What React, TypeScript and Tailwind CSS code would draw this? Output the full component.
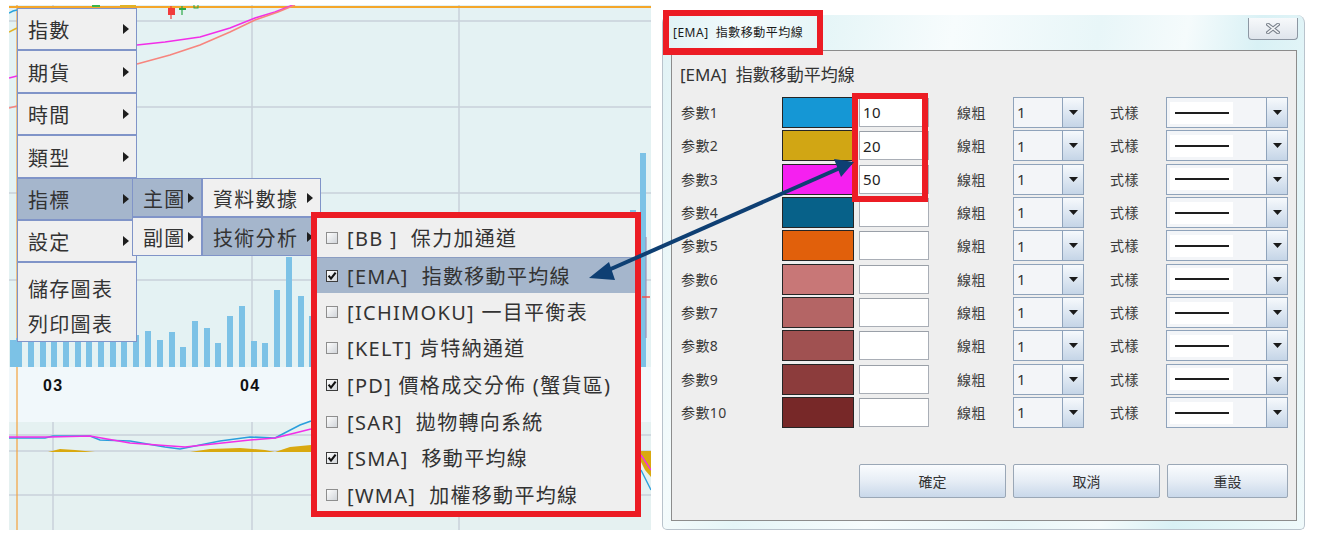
import React from "react";

const Tri = () => (
  <svg width="6" height="10" viewBox="0 0 6 10" className="shrink-0">
    <polygon points="0,0 6,5 0,10" fill="#1e1e1e" />
  </svg>
);

const DownTri = () => (
  <svg width="9" height="5" viewBox="0 0 9 5">
    <polygon points="0,0 9,0 4.5,5" fill="#1a1a1a" />
  </svg>
);

function CheckBox({ checked }: { checked: boolean }) {
  return (
    <svg width="12" height="12" viewBox="0 0 12 12" className="shrink-0">
      <defs>
        <linearGradient id="cbg" x1="0" y1="0" x2="1" y2="1">
          <stop offset="0" stopColor="#ffffff" />
          <stop offset="1" stopColor="#cfd3d8" />
        </linearGradient>
      </defs>
      <rect x="0.5" y="0.5" width="11" height="11" fill="url(#cbg)" stroke={checked ? "#3c3c3c" : "#8e8e8e"} />
      {checked && <path d="M2.6 5.6 L5 8.6 L9.6 2.6" fill="none" stroke="#111" strokeWidth="2.1" />}
    </svg>
  );
}

function MItem({ label, h, active, arrow = true }: { label: string; h: string; active?: boolean; arrow?: boolean }) {
  return (
    <div
      className={`flex items-center justify-between border border-[#8094c8] pl-[10px] pr-[7px] ${h} ${
        active ? "bg-[#a5b6cc]" : "bg-[#f0f0f0]"
      }`}
    >
      <span className="pt-[4px]">{label}</span>
      {arrow && <Tri />}
    </div>
  );
}

const bars: [number, number][] = [
  [10, 340], [16, 338], [28, 336], [40, 338], [51, 335], [63, 337], [75, 334], [86, 338], [98, 336], [110, 333], [121, 337], [133, 335],
  [145, 331], [157, 340], [169, 332], [180, 347], [192, 321], [204, 328], [215, 343], [227, 316], [239, 306], [251, 341], [262, 343],
  [274, 290], [286, 257], [298, 296], [309, 316], [321, 300], [333, 310], [630, 210], [640, 153],
];

function Chart() {
  return (
    <div className="relative w-[642px] h-[525px] shrink-0 ml-[9px] mt-[5px] text-[20px] tracking-[1.3px] text-[#333] leading-none">
      <svg width="642" height="525" viewBox="9 5 642 525" className="block">
        <rect x="9" y="5" width="642" height="362" fill="#e4f2f3" />
        <rect x="9" y="367" width="642" height="55" fill="#f1f8fb" />
        <rect x="9" y="422" width="642" height="108" fill="#e5f1f1" />
        {[21, 107, 193, 280].map((y) => (
          <line key={y} x1="9" x2="651" y1={y} y2={y} stroke="#c9d0da" strokeWidth="1.5" />
        ))}
        {[53, 252, 459].map((x) => (
          <line key={x} x1={x} x2={x} y1="5" y2="367" stroke="#c9d0da" strokeWidth="1.5" />
        ))}
        {[435, 451, 495].map((y) => (
          <line key={y} x1="9" x2="651" y1={y} y2={y} stroke="#c9d0da" strokeWidth="1.5" />
        ))}
        {[53, 252, 459].map((x) => (
          <line key={"l" + x} x1={x} x2={x} y1="422" y2="530" stroke="#c9d0da" strokeWidth="1.5" />
        ))}
        <line x1="17" x2="17" y1="5" y2="530" stroke="#f3a23c" strokeWidth="1.2" />
        {bars.map(([x, t]) => (
          <rect key={x} x={x} y={t} width="6" height={367 - t} fill="#7cc2e6" />
        ))}
        <line x1="646" x2="646" y1="237" y2="338" stroke="#9a93b8" strokeWidth="1.2" />
        <line x1="642" x2="650" y1="297" y2="297" stroke="#f0514d" strokeWidth="1.5" />
        <line x1="9" x2="651" y1="7" y2="7" stroke="#f5a62a" strokeWidth="2" />
        <polyline points="9,13 13,11 17,10" fill="none" stroke="#29a3dc" strokeWidth="1.5" />
        <polyline points="9,32 13,30 17,28" fill="none" stroke="#e0b328" strokeWidth="1.5" />
        <polyline points="9,78 17,76" fill="none" stroke="#f22ee8" strokeWidth="1.5" />
        <polyline points="9,108 17,106" fill="none" stroke="#f7857e" strokeWidth="1.5" />
        <line x1="171" x2="171" y1="6" y2="19" stroke="#f13b3b" strokeWidth="1.2" />
        <rect x="168" y="8" width="7" height="7" fill="#f13b3b" />
        <line x1="182" x2="182" y1="6" y2="15" stroke="#2aa845" strokeWidth="1.2" />
        <rect x="179" y="8" width="7" height="2" fill="#2aa845" />
        <rect x="194" y="4" width="4" height="4" fill="none" stroke="#2aa845" strokeWidth="1" />
        <rect x="92" y="5" width="8" height="2" fill="#3ab54a" />
        <rect x="120" y="5" width="16" height="2" fill="#e0b328" />
        <polyline points="137,45 165,42 200,37 230,28 255,18 275,12 293,5" fill="none" stroke="#f22ee8" strokeWidth="1.6" />
        <polyline points="137,64 170,55 200,45 230,32 255,20 278,12 295,5" fill="none" stroke="#f7857e" strokeWidth="1.6" />
        <polygon
          points="48,452 60,449 75,450 95,452 190,452 210,449 240,448 265,450 275,452 290,447 311,445 311,452"
          fill="#d9a90f"
        />
        <polyline
          points="9,438 45,438 53,436 90,436 100,440 130,441 165,447 180,449 190,447 220,441 250,437 275,438 300,425 311,421"
          fill="none"
          stroke="#2a9fdc"
          strokeWidth="1.6"
        />
        <polyline points="9,437 50,437 90,436 130,443 185,447 250,440 275,438 311,429" fill="none" stroke="#f22ee8" strokeWidth="1.6" />
        <polygon points="641,451 651,451 651,477 645,470 641,462" fill="#d9a90f" />
        <polyline points="641,455 651,470" fill="none" stroke="#f22ee8" strokeWidth="1.4" />
        <polyline points="641,470 651,490" fill="none" stroke="#2a9fdc" strokeWidth="1.4" />
        <text x="43" y="391" fontSize="16" fontWeight="700" fill="#111" fontFamily="Liberation Sans, Arial, sans-serif">
          03
        </text>
        <text x="240" y="391" fontSize="16" fontWeight="700" fill="#111" fontFamily="Liberation Sans, Arial, sans-serif">
          04
        </text>
      </svg>

      <div className="absolute left-[8px] top-[3px] w-[120px] flex flex-col">
        <MItem label="指數" h="h-[42px]" />
        <MItem label="期貨" h="h-[43px]" />
        <MItem label="時間" h="h-[42px]" />
        <MItem label="類型" h="h-[43px]" />
        <MItem label="指標" h="h-[42px]" active />
        <MItem label="設定" h="h-[42px]" />
        <div className="h-[80px] border border-[#8094c8] bg-[#f0f0f0] pl-[10px] pt-[15px] flex flex-col gap-[12px]">
          <span className="leading-[23px]">儲存圖表</span>
          <span className="leading-[23px]">列印圖表</span>
        </div>
      </div>

      <div className="absolute left-[123px] top-[173px] w-[70px] flex flex-col">
        <MItem label="主圖" h="h-[39px]" active />
        <MItem label="副圖" h="h-[39px]" />
      </div>
      <div className="absolute left-[193px] top-[173px] w-[119px] flex flex-col">
        <MItem label="資料數據" h="h-[39px]" />
        <MItem label="技術分析" h="h-[39px]" active />
      </div>

      <div className="absolute left-[302px] top-[207px] w-[330px] h-[305px] border-[6px] border-[#ec1c24] bg-[#efefef] overflow-hidden">
        <div className="flex flex-col pt-[2px]">
          {[
            ["[BB ]  保力加通道", false, false],
            ["[EMA]  指數移動平均線", true, true],
            ["[ICHIMOKU] 一目平衡表", false, false],
            ["[KELT] 肯特納通道", false, false],
            ["[PD] 價格成交分佈 (蟹貨區)", true, false],
            ["[SAR]  拋物轉向系統", false, false],
            ["[SMA]  移動平均線", true, false],
            ["[WMA]  加權移動平均線", false, false],
          ].map(([t, c, a]) => (
            <div
              key={t as string}
              className={`h-[36.7px] flex items-center pl-[9px] gap-[9px] ${
                a ? "bg-[#a5b6cc] border-t border-[#8b9dc2]" : ""
              }`}
            >
              <CheckBox checked={c as boolean} />
              <span className="whitespace-pre pt-[2px]">{t as string}</span>
            </div>
          ))}
        </div>
      </div>
    </div>
  );
}

const swatches = [
  "bg-[#1597d5]",
  "bg-[#d1a614]",
  "bg-[#f520f0]",
  "bg-[#076189]",
  "bg-[#e1600b]",
  "bg-[#c87777]",
  "bg-[#b46565]",
  "bg-[#a05151]",
  "bg-[#8c3c3c]",
  "bg-[#772828]",
];
const values = ["10", "20", "50", "", "", "", "", "", "", ""];

function DropBtn() {
  return (
    <div className="w-[21px] h-full border-l border-[#8fa3bb] bg-gradient-to-b from-[#f6f9fc] to-[#c5d5e7] flex items-center justify-center">
      <DownTri />
    </div>
  );
}

function Dialog() {
  return (
    <div className="relative shrink-0 ml-[11px] mt-[15px] w-[643px] h-[515px] rounded-t-[8px] rounded-b-[5px] border-x border-b border-[#b9c3cc] bg-[linear-gradient(100deg,#e0f2f5_0%,#f4fbfc_12%,#e5f5f7_22%,#f7fcfd_40%,#e8f6f8_60%,#f5fbfc_72%,#d9f1f5_82%,#f0fafb_100%)]">
      <div className="h-[35px] flex items-center pl-[10px] text-[12px] tracking-[0.5px] text-[#1a1a1a] whitespace-pre">
        [EMA]  指數移動平均線
      </div>
      <div className="absolute right-[6px] top-[3px] w-[50px] h-[22px] rounded-b-[4px] border border-[#8d97a3] border-t-0 bg-gradient-to-b from-[#f7f9fb] to-[#dfe5ec] flex items-center justify-center">
        <svg width="14" height="11" viewBox="0 0 14 11">
          <path d="M2 1.5 L12 9.5 M12 1.5 L2 9.5" stroke="#7a828c" strokeWidth="3.6" strokeLinecap="square" />
          <path d="M2 1.5 L12 9.5 M12 1.5 L2 9.5" stroke="#f4f6f8" strokeWidth="1.6" strokeLinecap="square" />
        </svg>
      </div>

      <div className="ml-[8px] w-[626px] h-[471px] border border-[#8c8c8c] bg-[#eeeeee] flex flex-col text-[#3a3a3a]">
        <div className="pl-[8px] mt-[12px] h-[24px] flex items-center text-[17px] whitespace-pre text-[#333]">
          [EMA]  指數移動平均線
        </div>
        <div className="mt-[10px] flex flex-col gap-[2.35px]">
          {swatches.map((sw, i) => (
            <div key={i} className="flex items-center h-[31px] text-[14px] tracking-[0.4px]">
              <div className="w-[110px] pl-[9px]">参數{i + 1}</div>
              <div className={`w-[72px] h-[31px] border border-[#252525] ${sw}`} />
              <div className="ml-[5px] w-[70px] h-[29px] bg-white border border-[#a9aeb6] border-t-[#9aa0a8] pl-[3px] flex items-center text-[15px] text-[#222]">
                {values[i]}
              </div>
              <div className="ml-[28px] w-[56px]">線粗</div>
              <div className="w-[71px] h-[31px] border border-[#8fa3bb] bg-[#f3f5f8] flex">
                <div className="flex-1 flex items-center pl-[3px] text-[15px] text-[#333]">1</div>
                <DropBtn />
              </div>
              <div className="ml-[26px] w-[56px]">式樣</div>
              <div className="w-[122px] h-[31px] border border-[#8fa3bb] bg-[#f3f5f8] flex">
                <div className="flex-1 flex items-center pl-[3px]">
                  <div className="w-[63px] h-[22px] bg-white flex items-center justify-center">
                    <div className="w-[54px] h-[2px] bg-[#1e1e1e]" />
                  </div>
                </div>
                <DropBtn />
              </div>
            </div>
          ))}
        </div>
        <div className="mt-[36px] flex justify-end gap-[7px] pr-[8px] text-[14px] text-[#333]">
          {[
            ["確定", "w-[147px]"],
            ["取消", "w-[147px]"],
            ["重設", "w-[121px]"],
          ].map(([t, w]) => (
            <div
              key={t}
              className={`${w} h-[34px] border border-[#9aa7b6] rounded-[2px] bg-gradient-to-b from-[#fafcfe] via-[#e6edf5] to-[#c9d8ea] flex items-center justify-center`}
            >
              {t}
            </div>
          ))}
        </div>
      </div>
    </div>
  );
}

export default function App() {
  return (
    <div className="relative w-[1323px] h-[544px] bg-white overflow-hidden flex items-start font-['Noto_Sans','Noto_Sans_CJK_TC',sans-serif]">
      <Chart />
      <Dialog />
      <div className="absolute left-[663px] top-[10px] w-[160px] h-[45px] border-[6px] border-b-[7px] border-[#ec1c24]" />
      <div className="absolute left-[852px] top-[93px] w-[76px] h-[109px] border-[6px] border-[#ec1c24]" />
      <svg className="absolute left-0 top-0 pointer-events-none" width="1323" height="544" viewBox="0 0 1323 544">
        <line x1="604" y1="272" x2="840" y2="168" stroke="#0e3f73" strokeWidth="4" />
        <polygon points="589,278 609,262 615,280" fill="#0e3f73" />
        <polygon points="854,162 834,159 841,177" fill="#0e3f73" />
      </svg>
    </div>
  );
}
